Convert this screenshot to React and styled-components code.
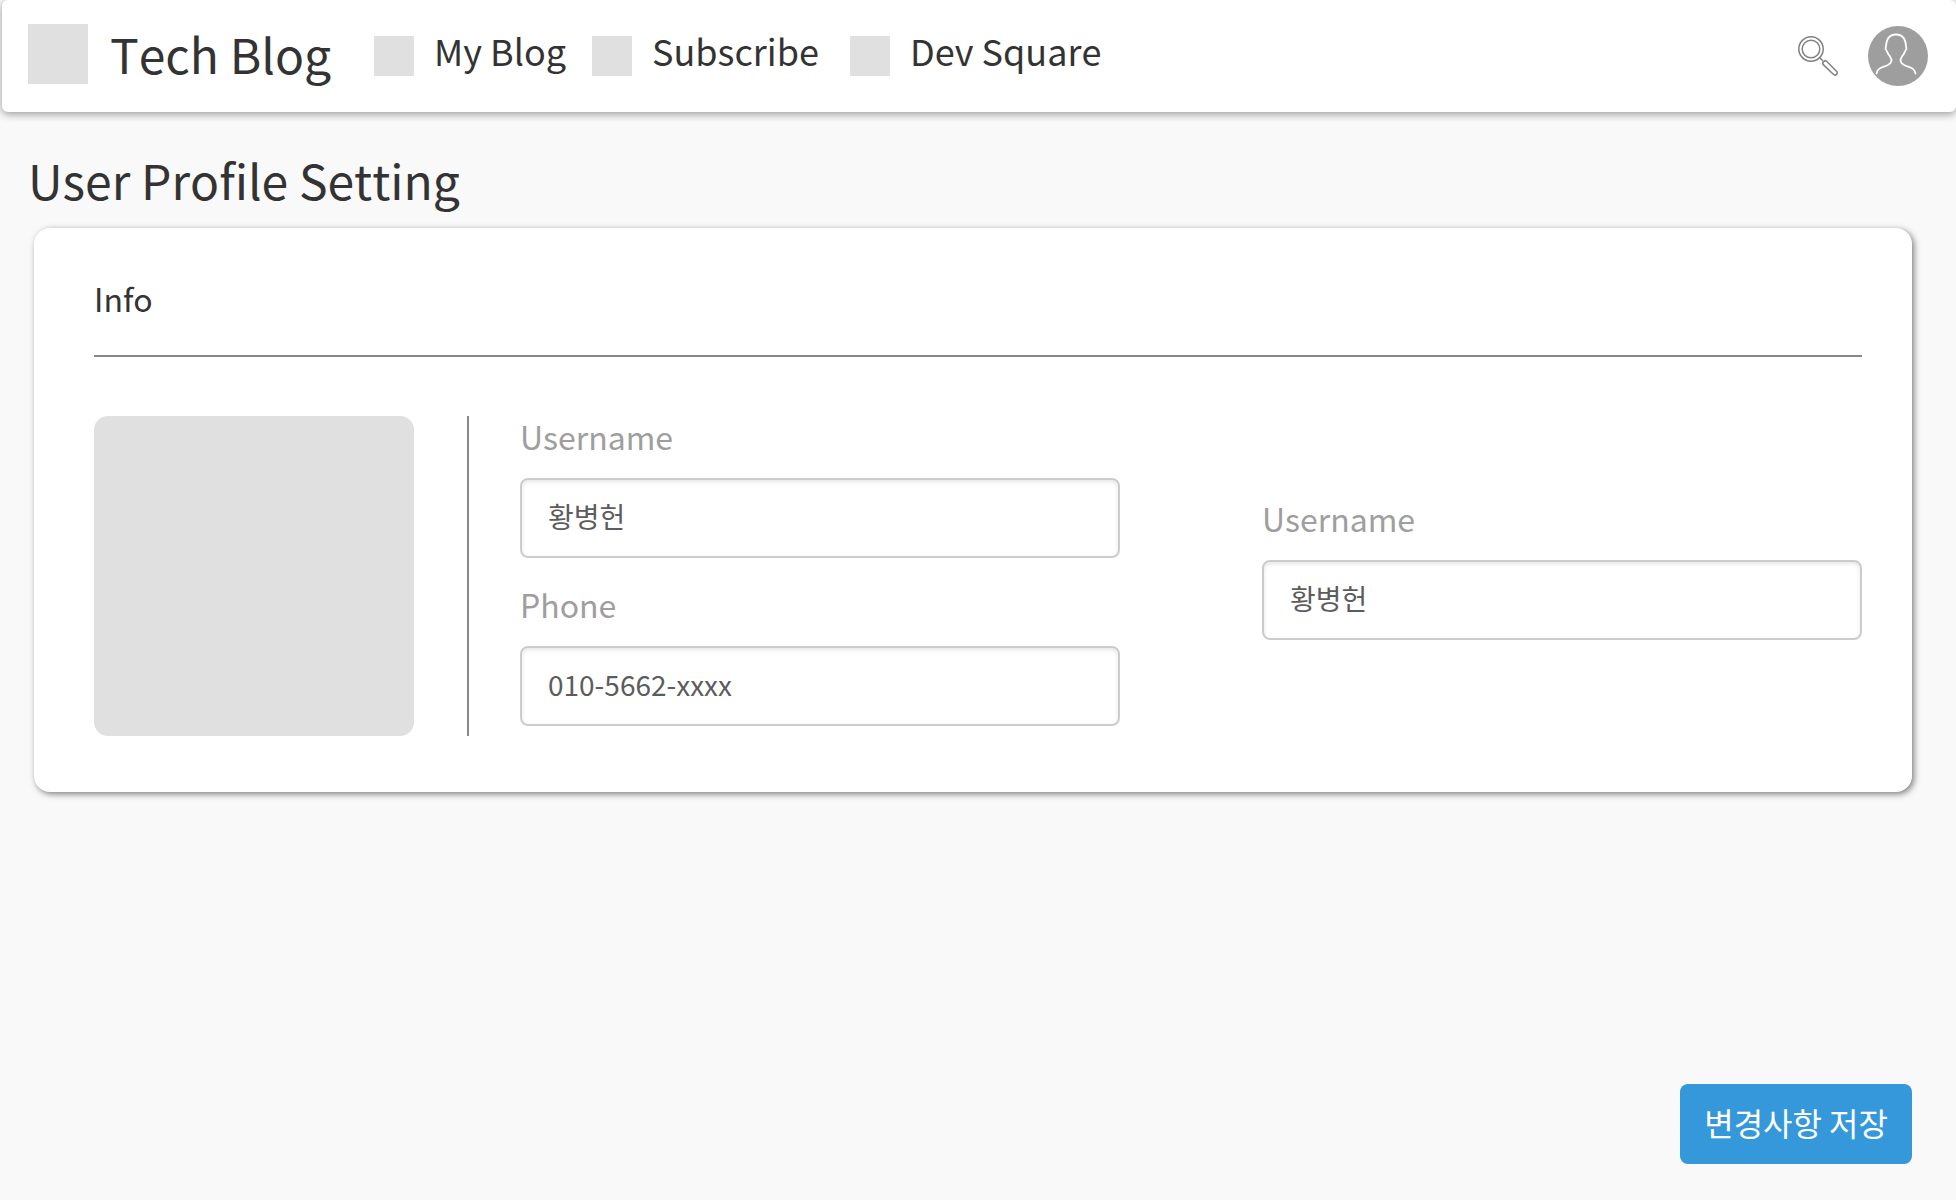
import React from 'react';
import styled, { createGlobalStyle } from 'styled-components';

const GlobalStyle = createGlobalStyle`
  *, *::before, *::after { box-sizing: border-box; }
  body {
    margin: 0;
    background: #f9f9f9;
    color: #333;
    font-family: "Noto Sans CJK KR", "Noto Sans", sans-serif;
    font-weight: 400;
    font-kerning: none;
  }
  h1, h2 { margin: 0; font-weight: inherit; }
  button, input { font-family: inherit; font-weight: inherit; font-kerning: inherit; }
`;

const Page = styled.div`
  display: flex;
  flex-direction: column;
  min-height: 100vh;
`;

const Header = styled.header`
  display: flex;
  align-items: center;
  justify-content: space-between;
  height: 112px;
  margin-left: 2px;
  padding: 0 28px 0 26px;
  background: #fff;
  border-radius: 6px;
  box-shadow: 0 2px 8px rgba(0, 0, 0, 0.4);
`;

const HeaderGroup = styled.div`
  display: flex;
  align-items: center;
  gap: ${({ $gap }) => $gap}px;
`;

const Brand = styled.a`
  display: flex;
  gap: 22px;
  padding-bottom: 4px;
  color: inherit;
  font-size: 48px;
  line-height: 58px;
  text-decoration: none;
  white-space: nowrap;
`;

const Placeholder = styled.span`
  flex: none;
  width: ${({ $size }) => $size}px;
  height: ${({ $size }) => $size}px;
  border-radius: ${({ $radius = 0 }) => $radius}px;
  background: #e0e0e0;
`;

const Nav = styled.nav`
  display: flex;
`;

const NavLink = styled.a`
  display: flex;
  gap: 20px;
  min-width: ${({ $width }) => $width}px;
  height: 40px;
  color: inherit;
  font-size: 36px;
  line-height: 28px;
  text-decoration: none;
  white-space: nowrap;
`;

const IconButton = styled.button`
  display: flex;
  padding: 0;
  border: 0;
  border-radius: 50%;
  background: none;
  cursor: pointer;
`;

const Main = styled.main`
  display: flex;
  flex: 1;
  flex-direction: column;
  padding: 32px 44px 36px 28px;
`;

const PageTitle = styled.h1`
  margin-bottom: 14px;
  font-size: 48px;
  line-height: 70px;
`;

const Card = styled.section`
  margin: 0 0 36px 6px;
  padding: 48px 50px 56px 60px;
  background: #fff;
  border-radius: 16px;
  box-shadow: 2px 2px 6px rgba(0, 0, 0, 0.5);
`;

const CardTitle = styled.h2`
  padding-bottom: 35px;
  border-bottom: 2px solid #888;
  font-size: 32px;
  line-height: 44px;
`;

const Profile = styled.div`
  display: flex;
  padding-top: 59px;
`;

const Divider = styled.div`
  flex: none;
  width: 2px;
  margin: 0 51px 0 53px;
  background: #888;
`;

const Fields = styled.div`
  display: grid;
  flex: 1;
  grid-template-columns: 1fr 1fr;
  gap: 142px;
`;

const Column = styled.div`
  display: flex;
  flex-direction: column;
  justify-content: center;
  gap: 26px;
  padding-bottom: 10px;

  &:last-child { padding-bottom: 14px; }
`;

const Field = styled.div`
  display: flex;
  flex-direction: column;
  gap: 22px;
`;

const Label = styled.label`
  color: #9e9e9e;
  font-size: 32px;
  line-height: 40px;
`;

const TextInput = styled.input`
  width: 100%;
  height: 80px;
  padding: 0 26px 4px;
  border: 2px solid #ccc;
  border-radius: 8px;
  background: #fff;
  box-shadow: inset 0 2px 4px rgba(0, 0, 0, 0.1);
  color: #5c5c5c;
  font-size: 28px;
`;

const SaveButton = styled.button`
  align-self: flex-end;
  height: 80px;
  margin-top: auto;
  padding: 0 24px 4px;
  border: 0;
  border-radius: 8px;
  background: #3498db;
  color: #fff;
  font-size: 32px;
  line-height: 46px;
  cursor: pointer;
`;

const SearchIcon = () => (
  <svg width="40" height="40" viewBox="0 0 40 40" fill="none" stroke="#808080" strokeWidth="1.5" aria-hidden="true">
    <circle cx="13" cy="13" r="12.2" />
    <circle cx="13" cy="13" r="8.8" />
    <path d="M22 22l3 3M25 28.400l10.600 10.100a2.200 2.200 0 0 0 3.100-3.100L28.400 25q-1.200-.8-2.200.2l-.9.9q-1 1-.3 2.300z" />
  </svg>
);

const UserIcon = () => (
  <svg width="60" height="60" viewBox="0 0 60 60" fill="none" aria-hidden="true">
    <circle cx="30" cy="30" r="30" fill="#9e9e9e" />
    <path
      d="M8.500 47.500C9.500 41 16 41.500 20 39C24 36.500 24.500 34 22 30.500C19.500 27.500 19.500 25.500 17.500 23C18.500 20 17 8.500 28 8.500C39 8.500 37.500 20 38.500 23C36.500 25.500 36.500 27.500 34 30.500C31.500 34 32 36.500 36 39C40 41.500 46.500 41 47.500 47.500"
      stroke="#fff"
      strokeWidth="1.800"
      strokeLinecap="round"
    />
  </svg>
);

const navItems = [
  { label: 'My Blog', width: 218 },
  { label: 'Subscribe', width: 258 },
  { label: 'Dev Square', width: 258 },
];

const columns = [
  [
    { id: 'username', label: 'Username', value: '황병헌' },
    { id: 'phone', label: 'Phone', value: '010-5662-xxxx' },
  ],
  [{ id: 'username-alt', label: 'Username', value: '황병헌' }],
];

export default function App() {
  return (
    <Page>
      <GlobalStyle />
      <Header>
        <HeaderGroup $gap={43}>
          <Brand href="#">
            <Placeholder $size={60} />
            Tech Blog
          </Brand>
          <Nav>
            {navItems.map(({ label, width }) => (
              <NavLink href="#" key={label} $width={width}>
                <Placeholder $size={40} />
                {label}
              </NavLink>
            ))}
          </Nav>
        </HeaderGroup>
        <HeaderGroup $gap={30}>
          <IconButton type="button" aria-label="Search">
            <SearchIcon />
          </IconButton>
          <IconButton type="button" aria-label="Account">
            <UserIcon />
          </IconButton>
        </HeaderGroup>
      </Header>
      <Main>
        <PageTitle>User Profile Setting</PageTitle>
        <Card>
          <CardTitle>Info</CardTitle>
          <Profile>
            <Placeholder $size={320} $radius={14} />
            <Divider />
            <Fields>
              {columns.map((fields, index) => (
                <Column key={index}>
                  {fields.map(({ id, label, value }) => (
                    <Field key={id}>
                      <Label htmlFor={id}>{label}</Label>
                      <TextInput id={id} type="text" defaultValue={value} />
                    </Field>
                  ))}
                </Column>
              ))}
            </Fields>
          </Profile>
        </Card>
        <SaveButton type="button">변경사항 저장</SaveButton>
      </Main>
    </Page>
  );
}
